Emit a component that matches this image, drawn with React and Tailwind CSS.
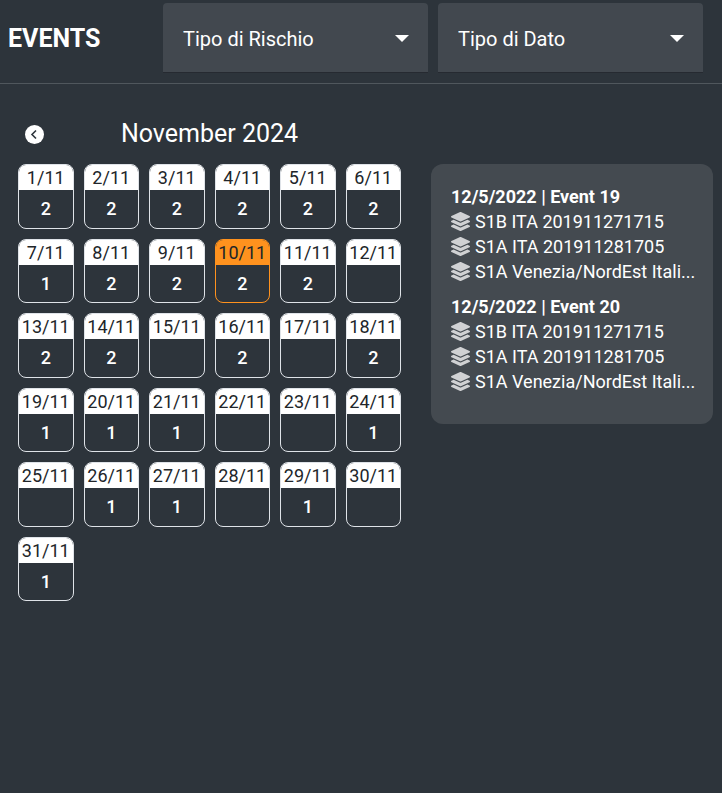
import React, { useState } from "react";
import { FaLayerGroup } from "react-icons/fa";

const eventCounts = [
  2, 2, 2, 2, 2, 2,
  1, 2, 2, 2, 2, null,
  2, 2, null, 2, null, 2,
  1, 1, 1, null, null, 1,
  null, 1, 1, null, 1, null,
  1,
];

const days = eventCounts.map((count, i) => ({ label: `${i + 1}/11`, count }));

const layers = [
  "S1B ITA 201911271715",
  "S1A ITA 201911281705",
  "S1A Venezia/NordEst Itali...",
];

const events = [
  { id: 19, date: "12/5/2022", layers },
  { id: 20, date: "12/5/2022", layers },
];

const FilterSelect = ({ label }) => (
  <div className="relative flex-1">
    <select
      aria-label={label}
      className="h-[70px] w-full appearance-none rounded-t-[4px] border-b border-[#262a31] bg-[#42484f] pt-[2px] pr-12 pl-5 text-[20px] text-white"
    >
      <option>{label}</option>
    </select>
    <svg
      viewBox="0 0 14 7"
      className="pointer-events-none absolute top-8 right-[19px] h-[7px] w-[14px] fill-white"
    >
      <path d="M0 0h14L7 7z" />
    </svg>
  </div>
);

const DayCell = ({ day, selected, onSelect }) => (
  <button
    type="button"
    onClick={onSelect}
    className={`flex flex-col overflow-hidden rounded-[8px] border text-[18px] ${
      selected ? "border-[#ff921e]" : "border-[#dfe3e8]"
    }`}
  >
    <span
      className={`h-[25px] w-full leading-[25px] text-[#212529] ${
        selected ? "bg-[#ff921e]" : "bg-white"
      }`}
    >
      {day.label}
    </span>
    <span className="flex w-full flex-1 items-center justify-center font-medium text-white">
      {day.count}
    </span>
  </button>
);

const EventItem = ({ event }) => (
  <div className="text-[18px] leading-[25px]">
    <h3 className="font-bold">
      {event.date} | Event {event.id}
    </h3>
    <ul>
      {event.layers.map((name) => (
        <li key={name} className="flex items-center gap-[5px]">
          <FaLayerGroup className="size-[19px] shrink-0 text-[#d0d1d3]" />
          <span className="truncate">{name}</span>
        </li>
      ))}
    </ul>
  </div>
);

const App = () => {
  const [selected, setSelected] = useState(9);

  return (
    <div className="min-h-screen bg-[#2d343b] font-['Roboto',sans-serif] text-white">
      <header className="flex items-center border-b border-[#50575d] pt-[3px] pr-[19px] pb-[10px] pl-2">
        <h1 className="w-[155px] pt-[2px] text-[25px] font-bold">EVENTS</h1>
        <div className="flex flex-1 gap-[10px]">
          <FilterSelect label="Tipo di Rischio" />
          <FilterSelect label="Tipo di Dato" />
        </div>
      </header>

      <main className="grid grid-cols-[383fr_282fr] gap-x-[30px] pt-8 pr-[9px] pl-[18px]">
        <div className="grid grid-cols-[33px_1fr_33px] items-center pb-3">
          <button type="button" aria-label="Previous month" className="justify-self-center">
            <svg viewBox="0 0 19 19" className="size-[19px]">
              <circle cx="9.5" cy="9.5" r="9.5" fill="#fff" />
              <path
                d="M11 5.5l-4 4 4 4"
                fill="none"
                stroke="#2d343b"
                strokeWidth="1.6"
              />
            </svg>
          </button>
          <h2 className="text-center text-[25px] leading-9">November 2024</h2>
        </div>

        <section className="col-start-1 grid min-h-[437px] auto-rows-fr grid-cols-6 gap-[10px]">
          {days.map((day, i) => (
            <DayCell
              key={day.label}
              day={day}
              selected={i === selected}
              onSelect={() => setSelected(i)}
            />
          ))}
        </section>

        <section className="flex min-w-0 flex-col gap-[10px] self-start rounded-[12px] bg-[#444a50] pt-5 pr-3 pb-[30px] pl-5">
          {events.map((event) => (
            <EventItem key={event.id} event={event} />
          ))}
        </section>
      </main>
    </div>
  );
};

export default App;
